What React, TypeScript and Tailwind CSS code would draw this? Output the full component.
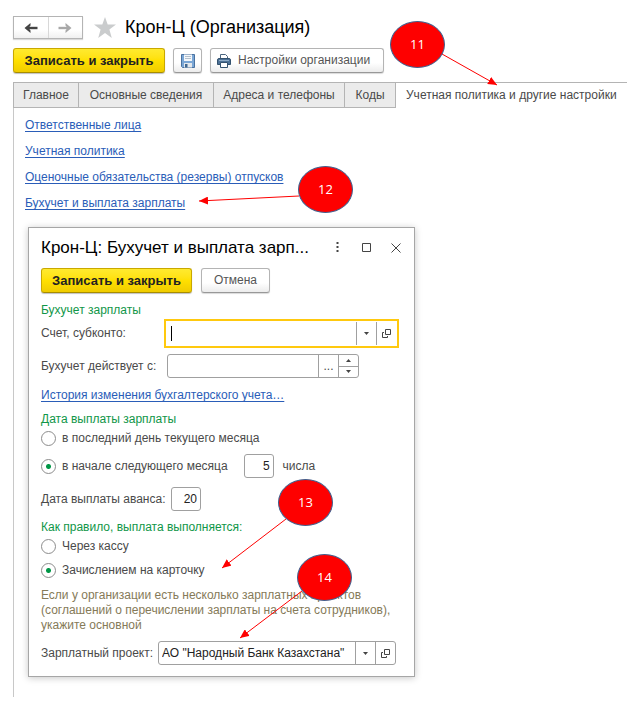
import React from "react";
import clsx from "clsx";

const tabs = [
  { label: "Главное", width: "w-[65px]" },
  { label: "Основные сведения", width: "w-[135px]" },
  { label: "Адреса и телефоны", width: "w-[131px]" },
  { label: "Коды", width: "w-[51px]" },
];

const links = [
  "Ответственные лица",
  "Учетная политика",
  "Оценочные обязательства (резервы) отпусков",
  "Бухучет и выплата зарплаты",
];

const arrows = [
  { from: [442, 54], to: [497, 85] },
  { from: [299, 196], to: [199, 201] },
  { from: [286, 519], to: [222, 568] },
  { from: [302, 591], to: [240, 638] },
];

function PrimaryButton({ className }: { className?: string }) {
  return (
    <button
      className={clsx(
        "h-[25px] rounded-[3px] border border-[#c9a800] border-b-[#a88d00] bg-linear-to-b from-[#ffea2e] via-[#ffe000] to-[#f0cc00] text-[13px] font-bold text-[#222] whitespace-nowrap shadow-[0_1px_1px_rgba(0,0,0,0.25)]",
        className
      )}
    >
      Записать и закрыть
    </button>
  );
}

function PlainButton({
  className,
  children,
  label,
}: {
  className?: string;
  children: React.ReactNode;
  label?: string;
}) {
  return (
    <button
      aria-label={label}
      className={clsx(
        "flex h-[25px] items-center rounded-[3px] border border-[#b4b4b4] border-b-[#989898] bg-linear-to-b from-white from-60% to-[#ececec] whitespace-nowrap shadow-[0_1px_1px_rgba(0,0,0,0.15)]",
        className
      )}
    >
      {children}
    </button>
  );
}

function Arrow({ className }: { className?: string }) {
  return (
    <svg width="14" height="12" viewBox="0 0 14 12" fill="none" className={className}>
      <path d="M13.500 6H4" stroke="currentColor" strokeWidth="2.4" />
      <path d="M6.500 1L0.500 6l6 5V8.400L4.500 6l2-2.400z" fill="currentColor" />
    </svg>
  );
}

function FloppyIcon() {
  return (
    <svg width="14" height="14" viewBox="0 0 14 14">
      <path d="M0.500 0.500h13v13h-12l-1-1z" fill="#7ba7d6" stroke="#4a72a0" />
      <path d="M3 0.500h8V7H3z" fill="#f4f7fa" />
      <path d="M4 2.500h6M4 4.500h6" stroke="#b4c0cc" />
      <path d="M3 9h8v4.500H3z" fill="#e4e8ec" />
      <path d="M4 10h2.500v3.500H4z" fill="#3f6790" />
    </svg>
  );
}

function PrinterIcon() {
  return (
    <svg width="14" height="14" viewBox="0 0 14 14">
      <path d="M3.500 5V0.500h5l2 2V5" fill="#fff" stroke="#4a6580" />
      <path d="M2 4.500h10a1.500 1.500 0 0 1 1.500 1.500v4.500H0.500V6A1.500 1.500 0 0 1 2 4.500z" fill="#4d7196" stroke="#34526f" />
      <path d="M2 6.500h10" stroke="#8fabc6" />
      <path d="M3.500 8.500h7v5h-7z" fill="#fff" stroke="#34526f" />
    </svg>
  );
}

function OpenIcon() {
  return (
    <svg width="9" height="9" viewBox="0 0 9 9" fill="none" stroke="#444">
      <path d="M3.500 0.500h5v5h-5z" />
      <path d="M2 3.500H0.500v5h5V7" />
    </svg>
  );
}

function Triangle({ up }: { up?: boolean }) {
  return (
    <svg width="5" height="3" viewBox="0 0 5 3" fill="#444">
      <path d={up ? "M0 3h5L2.500 0z" : "M0 0h5L2.500 3z"} />
    </svg>
  );
}

function PickerButtons() {
  return (
    <>
      <button aria-label="Выбрать из списка" className="flex w-5 items-center justify-center border-l border-[#a0a0a0]">
        <Triangle />
      </button>
      <button aria-label="Открыть" className="flex w-5 items-center justify-center border-l border-[#a0a0a0]">
        <OpenIcon />
      </button>
    </>
  );
}

function Radio({
  name,
  label,
  checked,
}: {
  name: string;
  label: string;
  checked?: boolean;
}) {
  return (
    <label className="flex items-center gap-[6px] whitespace-nowrap">
      <input
        type="radio"
        name={name}
        defaultChecked={checked}
        className="size-[15px] appearance-none rounded-full border border-[#8c8c8c] bg-white checked:bg-[radial-gradient(circle,#009646_2px,#fff_3px)]"
      />
      {label}
    </label>
  );
}

function Badge({ n, className }: { n: number; className: string }) {
  return (
    <span
      className={clsx(
        "absolute flex h-[47px] w-[55px] items-center justify-center rounded-[50%] border border-[#41618f] bg-[#fe0000] font-['Open_Sans',sans-serif] text-[13px] font-medium text-white",
        className
      )}
    >
      {n}
    </span>
  );
}

function Dialog() {
  return (
    <section
      role="dialog"
      aria-label="Бухучет и выплата зарплаты"
      className="mt-4 ml-[14px] w-[387px] border border-[#a6a6a6] bg-white pt-[7px] pr-[18px] pb-[11px] pl-3 shadow-[0_1px_7px_rgba(0,0,0,0.22)]"
    >
      <div className="flex h-[25px] items-center">
        <h2 className="flex-1 text-[17px] whitespace-nowrap text-black">Крон-Ц: Бухучет и выплата зарп...</h2>
        <div className="-mr-[14px] flex items-center text-[#444]">
          <button aria-label="Меню" className="flex w-[29px] justify-center">
            <svg width="3" height="11" viewBox="0 0 3 11" fill="currentColor">
              <path d="M0.500 0h2v2h-2zM0.500 4h2v2h-2zM0.500 8h2v2h-2z" />
            </svg>
          </button>
          <button aria-label="Развернуть" className="flex w-[29px] justify-center">
            <svg width="9" height="9" viewBox="0 0 9 9" fill="none" stroke="currentColor">
              <path d="M0.500 0.500h8v8h-8z" />
            </svg>
          </button>
          <button aria-label="Закрыть" className="flex w-[29px] justify-center">
            <svg width="10" height="10" viewBox="0 0 10 10" fill="none" stroke="currentColor">
              <path d="M0.500 0.500l9 9M9.500 0.500l-9 9" />
            </svg>
          </button>
        </div>
      </div>

      <div className="mt-2 flex gap-[9px]">
        <PrimaryButton className="w-[151px]" />
        <PlainButton className="w-[69px] justify-center text-[#555]">Отмена</PlainButton>
      </div>

      <h3 className="mt-[10px] text-[#109648]">Бухучет зарплаты</h3>
      <div className="mt-1 flex items-center">
        <label htmlFor="account" className="w-[126px]">
          Счет, субконто:
        </label>
        <div className="flex h-[23px] flex-1 items-stretch bg-white outline-2 outline-offset-1 outline-[#ffc90e]">
          <span className="my-1 ml-1 w-px bg-black" />
          <input id="account" className="w-0 flex-1 px-1 outline-none" />
          <PickerButtons />
        </div>
      </div>

      <div className="mt-[9px] flex items-center">
        <label htmlFor="since" className="w-[126px] whitespace-nowrap">
          Бухучет действует с:
        </label>
        <div className="flex h-6 w-[192px] items-stretch rounded-[3px] border border-[#a0a0a0]">
          <input id="since" className="w-0 flex-1 px-1 outline-none" />
          <button aria-label="Выбрать дату" className="w-5 border-l border-[#a0a0a0]">
            ...
          </button>
          <div className="flex w-5 flex-col border-l border-[#a0a0a0]">
            <button aria-label="Больше" className="flex flex-1 items-center justify-center border-b border-[#a0a0a0]">
              <Triangle up />
            </button>
            <button aria-label="Меньше" className="flex flex-1 items-center justify-center">
              <Triangle />
            </button>
          </div>
        </div>
      </div>

      <a href="#history" className="mt-[10px] block text-[#2a5db8] underline underline-offset-2">
        История изменения бухгалтерского учета…
      </a>

      <h3 className="mt-[9px] text-[#109648]">Дата выплаты зарплаты</h3>
      <div className="mt-1">
        <Radio name="payday" label="в последний день текущего месяца" />
      </div>
      <div className="mt-2 flex items-center">
        <Radio name="payday" label="в начале следующего месяца" checked />
        <input
          aria-label="Число месяца"
          defaultValue="5"
          className="ml-4 h-6 w-[30px] rounded-[3px] border border-[#a0a0a0] pr-[3px] text-right text-[#222]"
        />
        <span className="ml-[9px]">числа</span>
      </div>

      <div className="mt-[9px] flex items-center gap-[5px]">
        <label htmlFor="advance" className="w-[125px] whitespace-nowrap">
          Дата выплаты аванса:
        </label>
        <input
          id="advance"
          defaultValue="20"
          className="h-6 w-[30px] rounded-[3px] border border-[#a0a0a0] pr-[3px] text-right text-[#222]"
        />
      </div>

      <h3 className="mt-[9px] text-[#109648]">Как правило, выплата выполняется:</h3>
      <div className="mt-1 flex flex-col gap-[9px]">
        <Radio name="method" label="Через кассу" />
        <Radio name="method" label="Зачислением на карточку" checked />
      </div>

      <p className="mt-[10px] whitespace-nowrap text-[#857a58]">
        Если у организации есть несколько зарплатных проектов
        <br />
        (соглашений о перечислении зарплаты на счета сотрудников),
        <br />
        укажите основной
      </p>

      <div className="mt-2 flex items-center gap-[5px]">
        <label htmlFor="project" className="whitespace-nowrap">
          Зарплатный проект:
        </label>
        <div className="flex h-6 flex-1 items-stretch rounded-[3px] border border-[#a0a0a0]">
          <input
            id="project"
            defaultValue={'АО "Народный Банк Казахстана"'}
            className="w-0 flex-1 pl-[3px] text-[#222] outline-none"
          />
          <PickerButtons />
        </div>
      </div>
    </section>
  );
}

function App() {
  return (
    <main className="relative bg-white pt-4 pr-[14px] pb-[14px] pl-[13px] font-['Liberation_Sans',Arial,sans-serif] text-[12px] leading-[15px] text-[#4a4a4a]">
      <header className="flex h-[23px] items-center">
        <div className="flex h-[23px] w-[70px] border border-[#b4b4b4] bg-linear-to-b from-white from-60% to-[#f0f0f0] shadow-[0_1px_1px_rgba(0,0,0,0.15)]">
          <button aria-label="Назад" className="flex flex-1 items-center justify-center">
            <Arrow className="text-[#444]" />
          </button>
          <button aria-label="Вперед" className="flex flex-1 items-center justify-center border-l border-[#d8d8d8]">
            <Arrow className="rotate-180 text-[#a8a8a8]" />
          </button>
        </div>
        <svg width="22" height="21" viewBox="0 0 22 21" fill="#cacccd" className="ml-[11px]">
          <path d="M11 0l2.700 7.600H22l-6.600 5L17.800 21 11 16l-6.800 5 2.400-8.400L0 7.600h8.300z" />
        </svg>
        <h1 className="ml-[9px] text-[18px] whitespace-nowrap text-black">Крон-Ц (Организация)</h1>
      </header>

      <div className="mt-[9px] flex">
        <PrimaryButton className="w-[152px]" />
        <PlainButton className="ml-2 w-[29px] justify-center" label="Записать">
          <FloppyIcon />
        </PlainButton>
        <PlainButton className="ml-2 w-[174px] gap-[7px] pl-[6px] text-[#555]">
          <PrinterIcon />
          Настройки организации
        </PlainButton>
      </div>

      <nav role="tablist" className="mt-[9px] flex h-[26px] border-t border-l border-[#b4b4b4]">
        {tabs.map((tab) => (
          <button
            key={tab.label}
            role="tab"
            className={clsx(
              "shrink-0 border-r border-b border-[#b4b4b4] bg-[#ebebeb] text-center whitespace-nowrap",
              tab.width
            )}
          >
            {tab.label}
          </button>
        ))}
        <button role="tab" aria-selected="true" className="px-[10px] whitespace-nowrap">
          Учетная политика и другие настройки
        </button>
      </nav>

      <div className="border-l border-[#c8c8c8] pt-[10px] pb-5">
        <ul className="flex flex-col gap-[11px] pl-[11px]">
          {links.map((link) => (
            <li key={link}>
              <a href="#settings" className="text-[#2a5db8] underline underline-offset-2">
                {link}
              </a>
            </li>
          ))}
        </ul>
        <Dialog />
      </div>

      {/* Step markers */}
      <svg width="641" height="712" viewBox="0 0 641 712" className="pointer-events-none absolute top-0 left-0">
        <defs>
          <marker id="head" markerUnits="userSpaceOnUse" markerWidth="9" markerHeight="8" refX="9" refY="4" orient="auto">
            <path d="M0 0l9 4-9 4z" fill="#fe0000" />
          </marker>
        </defs>
        {arrows.map(({ from, to }) => (
          <line
            key={to.join()}
            x1={from[0]}
            y1={from[1]}
            x2={to[0]}
            y2={to[1]}
            stroke="#fe0000"
            markerEnd="url(#head)"
          />
        ))}
      </svg>
      <Badge n={11} className="top-[21px] left-[390px]" />
      <Badge n={12} className="top-[166px] left-[298px]" />
      <Badge n={13} className="top-[479px] left-[278px]" />
      <Badge n={14} className="top-[554px] left-[297px]" />
    </main>
  );
}

export default App;
